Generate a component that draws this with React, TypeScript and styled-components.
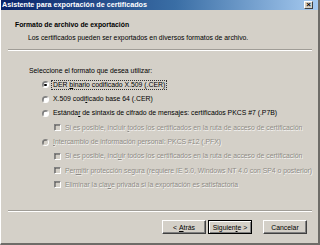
import styled, { createGlobalStyle } from 'styled-components';

const GlobalStyle = createGlobalStyle`
  html, body {
    margin: 0;
    padding: 0;
    background: #d4d0c8;
  }
  body {
    font-family: "Liberation Sans", Arial, sans-serif;
  }
`;

const Window = styled.div`
  width: 320px;
  height: 245px;
  box-sizing: border-box;
  display: flex;
  flex-direction: column;
  background: #d4d0c8;
  border-left: 1px solid #ffffff;
  border-right: 2px solid #6e6c68;
  border-bottom: 2px solid #6e6c68;
  overflow: hidden;
  color: #000;
  font-size: 6.85px;
`;

const TitleBar = styled.div`
  height: 10px;
  flex: none;
  display: flex;
  align-items: center;
  justify-content: space-between;
  padding: 0 5px 0 1px;
  background: linear-gradient(to right, #0a246a 0%, #3a6ea5 55%, #a6caf0 100%);
`;

const TitleText = styled.span`
  color: #fff;
  font-weight: bold;
  font-size: 7.2px;
  line-height: 10px;
`;

const CloseButton = styled.div`
  width: 9px;
  height: 8px;
  box-sizing: border-box;
  background: #d4d0c8;
  border: 1px solid;
  border-color: #ffffff #404040 #404040 #ffffff;
  display: flex;
  align-items: center;
  justify-content: center;
  font-size: 8px;
  line-height: 6px;
  font-weight: bold;
  color: #000;
`;

const Header = styled.div`
  height: 39px;
  flex: none;
  box-sizing: border-box;
  padding: 10px 0 0 14px;
`;

const HeaderTitle = styled.div`
  font-weight: bold;
  line-height: 9px;
`;

const HeaderSub = styled.div`
  margin: 4px 0 0 13px;
  line-height: 9px;
`;

const Separator = styled.div`
  flex: none;
  margin: 0 6px 0 7px;
  border-top: 1px solid #a09d97;
  border-bottom: 1px solid #ffffff;
`;

const Body = styled.div`
  flex: 1;
  padding: 13.25px 0 0 28px;
`;

const Prompt = styled.div`
  height: 13.5px;
  line-height: 13.5px;
`;

const Row = styled.div<{ $indent?: number }>`
  height: 14.3px;
  display: flex;
  align-items: center;
  padding-left: ${(p) => p.$indent ?? 13}px;
  gap: 3px;
`;

const Radio = styled.span<{ $checked?: boolean; $disabled?: boolean }>`
  width: 7px;
  height: 7px;
  flex: none;
  box-sizing: border-box;
  border-radius: 50%;
  border: 1px solid;
  border-color: #808080 #ffffff #ffffff #808080;
  background: ${(p) => (p.$disabled ? '#d4d0c8' : '#ffffff')};
  box-shadow: inset 0.5px 0.5px 0 #404040;
  display: flex;
  align-items: center;
  justify-content: center;
  &::after {
    content: '';
    display: ${(p) => (p.$checked ? 'block' : 'none')};
    width: 2.5px;
    height: 2.5px;
    border-radius: 50%;
    background: #000;
  }
`;

const Check = styled.span`
  width: 7px;
  height: 7px;
  flex: none;
  box-sizing: border-box;
  border: 1px solid;
  border-color: #808080 #ffffff #ffffff #808080;
  background: #d4d0c8;
  box-shadow: inset 0.5px 0.5px 0 #404040;
`;

const Label = styled.span<{ $disabled?: boolean; $focus?: boolean }>`
  line-height: 8px;
  white-space: nowrap;
  padding: 0 1px;
  color: ${(p) => (p.$disabled ? '#8e8b85' : '#000')};
  text-shadow: ${(p) => (p.$disabled ? '0.6px 0.6px 0 rgba(255,255,255,0.85)' : 'none')};
  outline: ${(p) => (p.$focus ? '1px dotted #333' : 'none')};
  outline-offset: 0;
`;

const Footer = styled.div`
  flex: none;
  height: 31px;
  box-sizing: border-box;
  display: flex;
  justify-content: flex-end;
  align-items: flex-start;
  padding: 8px 11px 0 0;
`;

const Button = styled.div<{ $default?: boolean; $gap?: number }>`
  width: 44px;
  height: 14px;
  box-sizing: border-box;
  margin-left: ${(p) => p.$gap ?? 0}px;
  display: flex;
  align-items: center;
  justify-content: center;
  background: #d4d0c8;
  border: 1px solid;
  border-color: ${(p) => (p.$default ? '#000' : '#ffffff #404040 #404040 #ffffff')};
  box-shadow: ${(p) =>
    p.$default
      ? 'inset 1px 1px 0 #ffffff, inset -1px -1px 0 #808080'
      : 'inset -1px -1px 0 #808080'};
  white-space: pre;
`;

const U = styled.span`
  text-decoration: underline;
`;

export default function App() {
  return (
    <>
      <GlobalStyle />
      <Window>
        <TitleBar>
          <TitleText>Asistente para exportación de certificados</TitleText>
          <CloseButton>×</CloseButton>
        </TitleBar>
        <Header>
          <HeaderTitle>Formato de archivo de exportación</HeaderTitle>
          <HeaderSub>Los certificados pueden ser exportados en diversos formatos de archivo.</HeaderSub>
        </Header>
        <Separator />
        <Body>
          <Prompt>Seleccione el formato que desea utilizar:</Prompt>
          <Row>
            <Radio $checked />
            <Label $focus>
              DER <U>b</U>inario codificado X.509 (.CER)
            </Label>
          </Row>
          <Row>
            <Radio />
            <Label>
              X.509 codi<U>f</U>icado base 64 (.CER)
            </Label>
          </Row>
          <Row>
            <Radio />
            <Label>
              Estánda<U>r</U> de sintaxis de cifrado de mensajes: certificados PKCS #7 (.P7B)
            </Label>
          </Row>
          <Row $indent={25}>
            <Check />
            <Label $disabled>
              Si es posible, incluir <U>t</U>odos los certificados en la ruta de acceso de certificación
            </Label>
          </Row>
          <Row>
            <Radio $disabled />
            <Label $disabled>
              <U>I</U>ntercambio de información personal: PKCS #12 (.PFX)
            </Label>
          </Row>
          <Row $indent={25}>
            <Check />
            <Label $disabled>
              Si es posible, incl<U>u</U>ir todos los certificados en la ruta de acceso de certificación
            </Label>
          </Row>
          <Row $indent={25}>
            <Check />
            <Label $disabled>
              Per<U>m</U>itir protección segura (requiere IE 5.0, Windows NT 4.0 con SP4 o posterior)
            </Label>
          </Row>
          <Row $indent={25}>
            <Check />
            <Label $disabled>
              Eliminar la cla<U>v</U>e privada si la exportación es satisfactoria
            </Label>
          </Row>
        </Body>
        <Separator />
        <Footer>
          <Button>
            {'< '}
            <U>A</U>trás
          </Button>
          <Button $default $gap={2}>
            Siguien<U>t</U>e{' >'}
          </Button>
          <Button $gap={11}>Cancelar</Button>
        </Footer>
      </Window>
    </>
  );
}
